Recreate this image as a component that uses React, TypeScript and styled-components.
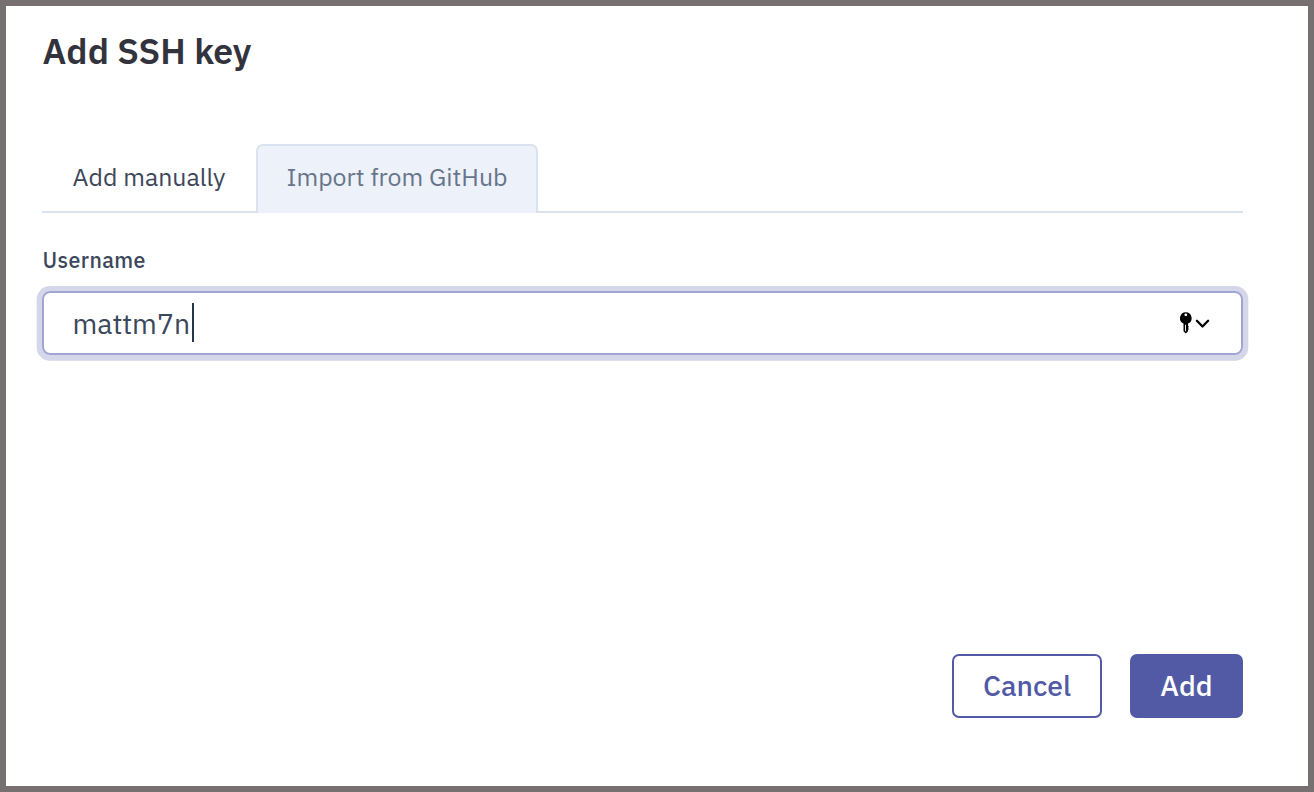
import React from "react";
import styled, { createGlobalStyle } from "styled-components";

const GlobalStyle = createGlobalStyle`
  * { box-sizing: border-box; }
  body {
    margin: 0;
    background: #767170;
    font-family: "IBM Plex Sans", "Noto Sans", sans-serif;
    overflow: hidden;
  }
`;

const Backdrop = styled.div`
  height: 792px;
  padding: 6px;
  background: #767170;
`;

const Dialog = styled.main`
  display: flex;
  flex-direction: column;
  height: 780px;
  padding: 20px 65px 68px 36px;
  background: #fff;
`;

const Title = styled.h1`
  margin: 0 0 68px 0.5px;
  height: 50px;
  font-size: 35.5px;
  font-weight: 600;
  line-height: 50px;
  white-space: nowrap;
  color: #33333d;
`;

const Tabs = styled.div`
  display: flex;
  height: 69px;
  box-shadow: inset 0 -2px #d9e2ee;
`;

const Tab = styled.button<{ $width: number; $filled?: boolean }>`
  width: ${(p) => p.$width}px;
  height: 69px;
  padding: 0 0 6px 28.5px;
  border: 2px solid ${(p) => (p.$filled ? "#d9e2ee" : "transparent")};
  border-bottom: 0;
  border-radius: 7px 7px 0 0;
  background: ${(p) => (p.$filled ? "#edf1f9" : "transparent")};
  color: ${(p) => (p.$filled ? "#67758a" : "#3d4759")};
  font-family: inherit;
  font-size: 24.9px;
  line-height: 36px;
  text-align: left;
  white-space: nowrap;
`;

const Label = styled.label`
  display: block;
  height: 30px;
  margin: 32px 0 16px 0.5px;
  font-size: 21.4px;
  font-weight: 500;
  line-height: 30px;
  letter-spacing: 0.4px;
  color: #3b475a;
`;

const Field = styled.div`
  display: flex;
  align-items: center;
  height: 64px;
  padding: 0 30px 0 28.5px;
  border: 2px solid #a2a5d3;
  border-radius: 8px;
  box-shadow: 0 0.4px 0 5.3px #d4d6ea;
`;

const Value = styled.span`
  padding-top: 1px;
  font-size: 28.4px;
  line-height: 38px;
  color: #3b475a;
`;

const Caret = styled.span`
  width: 2px;
  height: 39px;
  margin: 0 0 2px 2px;
  background: #26364a;
`;

const KeyIcon = styled.svg`
  display: block;
  margin-left: auto;
`;

const Actions = styled.footer`
  display: flex;
  justify-content: flex-end;
  gap: 28px;
  margin-top: auto;
`;

const Button = styled.button<{ $width: number; $primary?: boolean }>`
  width: ${(p) => p.$width}px;
  height: 64px;
  padding: 0;
  border: 2px solid #525aa5;
  border-radius: 7px;
  background: ${(p) => (p.$primary ? "#525aa5" : "#fff")};
  color: ${(p) => (p.$primary ? "#fff" : "#525aa5")};
  font-family: inherit;
  font-size: 28.4px;
  font-weight: 500;
  line-height: 40px;
`;

export default function App() {
  return (
    <Backdrop>
      <GlobalStyle />
      <Dialog>
        <Title>Add SSH key</Title>
        <Tabs>
          <Tab $width={214}>Add manually</Tab>
          <Tab $width={282} $filled>Import from GitHub</Tab>
        </Tabs>
        <Label>Username</Label>
        <Field>
          <Value>mattm7n</Value>
          <Caret />
          <KeyIcon width="32" height="24" viewBox="0 0 32 24">
            <path
              fillRule="evenodd"
              d="M6.8 1.3a5.9 5.9 0 0 0-2.3 11.3v7.6l2.3 2.4 2.3-2.3v-1.4l.7-1-.7-1 .7-1.1-.7-1v-2.2A5.9 5.9 0 0 0 6.8 1.3Zm0 1.1a1.4 1.4 0 1 1 0 2.8 1.4 1.4 0 0 1 0-2.8Zm-.7 11.4h.9v6.4h-.9Z"
            />
            <path d="M17.9 9.8l5.6 5.7 5.6-5.7" fill="none" stroke="#000" strokeWidth="2.3" strokeLinecap="round" strokeLinejoin="round" />
          </KeyIcon>
        </Field>
        <Actions>
          <Button $width={150}>Cancel</Button>
          <Button $width={113} $primary>Add</Button>
        </Actions>
      </Dialog>
    </Backdrop>
  );
}
